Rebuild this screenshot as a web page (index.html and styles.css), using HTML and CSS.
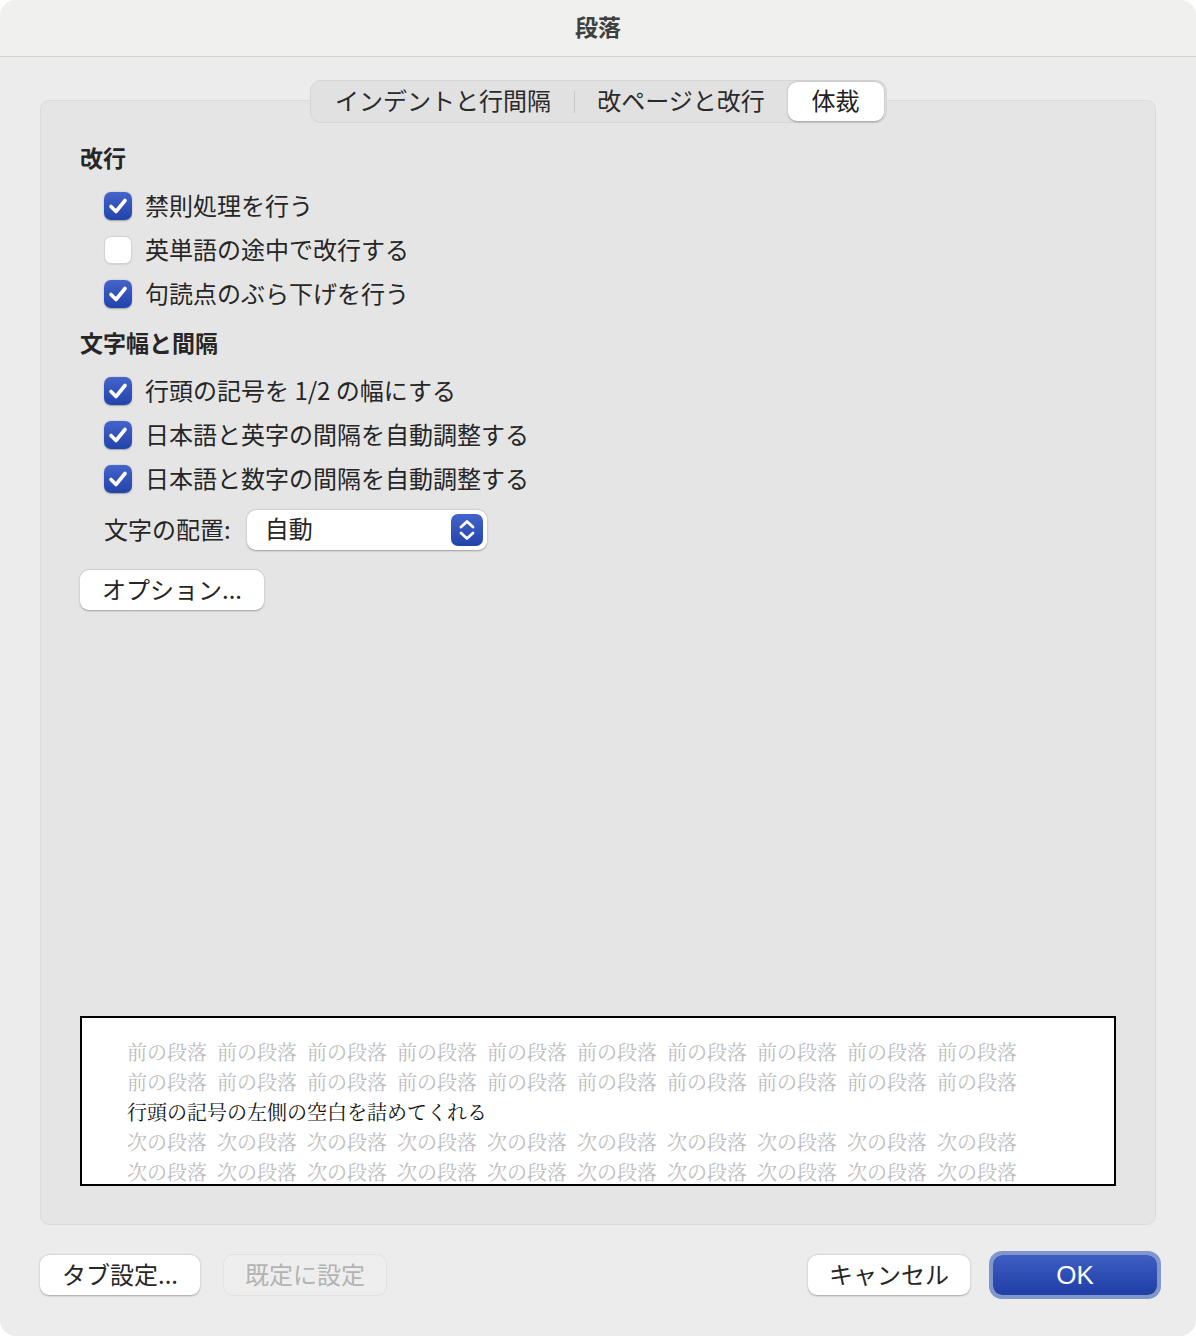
FILE: index.html
```html
<!DOCTYPE html>
<html lang="ja">
<head>
<meta charset="utf-8">
<title>段落</title>
<link rel="stylesheet" href="styles.css">
</head>
<body>
<div class="window">
  <div class="titlebar">段落</div>
  <div class="content">
    <div class="tabs-row">
      <div class="tabs">
        <div class="tab tab-1">インデントと行間隔</div>
        <div class="tab-divider"></div>
        <div class="tab tab-2">改ページと改行</div>
        <div class="tab tab-3 selected">体裁</div>
      </div>
    </div>
    <div class="group">
      <div class="heading">改行</div>
      <div class="row"><span class="checkbox checked"><svg viewBox="0 0 28 28" width="28" height="28"><path d="M7 14.5 L12 19.5 L21 8.5" fill="none" stroke="#fff" stroke-width="3.6" stroke-linecap="round" stroke-linejoin="round"/></svg></span><span class="label">禁則処理を行う</span></div>
      <div class="row"><span class="checkbox"></span><span class="label">英単語の途中で改行する</span></div>
      <div class="row"><span class="checkbox checked"><svg viewBox="0 0 28 28" width="28" height="28"><path d="M7 14.5 L12 19.5 L21 8.5" fill="none" stroke="#fff" stroke-width="3.6" stroke-linecap="round" stroke-linejoin="round"/></svg></span><span class="label">句読点のぶら下げを行う</span></div>

      <div class="heading heading-2">文字幅と間隔</div>
      <div class="row"><span class="checkbox checked"><svg viewBox="0 0 28 28" width="28" height="28"><path d="M7 14.5 L12 19.5 L21 8.5" fill="none" stroke="#fff" stroke-width="3.6" stroke-linecap="round" stroke-linejoin="round"/></svg></span><span class="label">行頭の記号を 1/2 の幅にする</span></div>
      <div class="row"><span class="checkbox checked"><svg viewBox="0 0 28 28" width="28" height="28"><path d="M7 14.5 L12 19.5 L21 8.5" fill="none" stroke="#fff" stroke-width="3.6" stroke-linecap="round" stroke-linejoin="round"/></svg></span><span class="label">日本語と英字の間隔を自動調整する</span></div>
      <div class="row"><span class="checkbox checked"><svg viewBox="0 0 28 28" width="28" height="28"><path d="M7 14.5 L12 19.5 L21 8.5" fill="none" stroke="#fff" stroke-width="3.6" stroke-linecap="round" stroke-linejoin="round"/></svg></span><span class="label">日本語と数字の間隔を自動調整する</span></div>

      <div class="popup-row">
        <span class="label">文字の配置:</span>
        <div class="popup">
          <span class="popup-value">自動</span>
          <span class="stepper"><svg viewBox="0 0 32 32" width="32" height="32"><path d="M10 13 L16 7.5 L22 13 M10 19 L16 24.5 L22 19" fill="none" stroke="#fff" stroke-width="2.8" stroke-linecap="round" stroke-linejoin="round"/></svg></span>
        </div>
      </div>

      <div class="options-row"><button class="btn btn-options">オプション...</button></div>

      <div class="preview">
        <div class="pline grey"><span>前の段落</span><span>前の段落</span><span>前の段落</span><span>前の段落</span><span>前の段落</span><span>前の段落</span><span>前の段落</span><span>前の段落</span><span>前の段落</span><span>前の段落</span></div>
        <div class="pline grey"><span>前の段落</span><span>前の段落</span><span>前の段落</span><span>前の段落</span><span>前の段落</span><span>前の段落</span><span>前の段落</span><span>前の段落</span><span>前の段落</span><span>前の段落</span></div>
        <div class="pline main">行頭の記号の左側の空白を詰めてくれる</div>
        <div class="pline grey"><span>次の段落</span><span>次の段落</span><span>次の段落</span><span>次の段落</span><span>次の段落</span><span>次の段落</span><span>次の段落</span><span>次の段落</span><span>次の段落</span><span>次の段落</span></div>
        <div class="pline grey"><span>次の段落</span><span>次の段落</span><span>次の段落</span><span>次の段落</span><span>次の段落</span><span>次の段落</span><span>次の段落</span><span>次の段落</span><span>次の段落</span><span>次の段落</span></div>
      </div>
    </div>

    <div class="footer">
      <div class="footer-left">
        <button class="btn btn-tab">タブ設定...</button>
        <button class="btn btn-default disabled">既定に設定</button>
      </div>
      <div class="footer-right">
        <button class="btn btn-cancel">キャンセル</button>
        <button class="btn btn-ok">OK</button>
      </div>
    </div>
  </div>
</div>
</body>
</html>
```

FILE: styles.css
```css
html, body {
  margin: 0;
  padding: 0;
  background: #ffffff;
}

body {
  font-family: "Noto Sans CJK JP", "Noto Sans", sans-serif;
  color: #262626;
}

.window {
  width: 1196px;
  height: 1336px;
  background: #ececec;
  border-radius: 16px;
  overflow: hidden;
  display: flex;
  flex-direction: column;
  box-sizing: border-box;
}

.titlebar {
  height: 56px;
  flex: none;
  box-sizing: border-box;
  background: #f0f0ef;
  border-bottom: 1px solid #d2d2d2;
  display: flex;
  align-items: center;
  justify-content: center;
  font-size: 23px;
  font-weight: 700;
  color: #3f3f3f;
  padding-bottom: 5px;
  box-sizing: content-box;
  height: 51px;
}

.content {
  flex: 1;
  display: flex;
  flex-direction: column;
  padding: 0 40px;
}

.tabs-row {
  display: flex;
  justify-content: center;
  margin-top: 23px;
  position: relative;
  z-index: 2;
}

.tabs {
  display: flex;
  align-items: center;
  height: 43px;
  box-sizing: border-box;
  padding: 2px;
  background: #e1e1e1;
  border: 1px solid #d6d6d6;
  border-radius: 11px;
}

.tab {
  height: 39px;
  box-sizing: border-box;
  padding-bottom: 3px;
  display: flex;
  align-items: center;
  justify-content: center;
  font-size: 24px;
  color: #2a2a2a;
  line-height: 1;
}

.tab-1 { width: 261px; }
.tab-2 { width: 213px; }
.tab-3 { width: 96px; }

.tab-divider {
  width: 1px;
  height: 22px;
  background: #c8c8c8;
}

.tab.selected {
  background: #ffffff;
  border-radius: 9px;
  box-shadow: 0 0.5px 2px rgba(0, 0, 0, 0.3);
  color: #222;
}

.group {
  flex: none;
  height: 1125px;
  margin-top: -23px;
  box-sizing: border-box;
  background: #e5e5e5;
  border: 1px solid #dbdbdb;
  border-radius: 9px;
  padding: 38px 39px 38px 39px;
  display: flex;
  flex-direction: column;
}

.heading {
  height: 36px;
  line-height: 36px;
  font-size: 23px;
  font-weight: 700;
  color: #262626;
  margin-bottom: 9px;
}

.heading-2 {
  margin-top: 8px;
}

.row {
  height: 44px;
  display: flex;
  align-items: center;
  padding-left: 24px;
}

.checkbox {
  width: 28px;
  height: 28px;
  flex: none;
  box-sizing: border-box;
  border-radius: 7px;
  background: #ffffff;
  border: 1px solid #d3d3d3;
  box-shadow: 0 0.5px 1px rgba(0, 0, 0, 0.08);
  margin-right: 13px;
  display: flex;
  align-items: center;
  justify-content: center;
}

.checkbox.checked {
  border: none;
  background: linear-gradient(#4464cc, #2243aa);
  box-shadow: 0 0.5px 1.5px rgba(0, 0, 0, 0.3);
}

.checkbox svg {
  display: block;
}

.label {
  font-size: 24px;
  line-height: 1;
  color: #262626;
  white-space: nowrap;
  padding-bottom: 2px;
}

.popup-row {
  display: flex;
  align-items: center;
  margin-top: 9px;
  padding-left: 24px;
  height: 40px;
}

.popup-row .label {
  margin-right: 16px;
}

.popup {
  width: 240px;
  height: 40px;
  box-sizing: border-box;
  background: #ffffff;
  border-radius: 9px;
  box-shadow: 0 0.5px 2px rgba(0, 0, 0, 0.32);
  display: flex;
  align-items: center;
  justify-content: space-between;
  padding: 0 4px 0 18px;
}

.popup-value {
  font-size: 24px;
  line-height: 1;
  padding-bottom: 4px;
  color: #262626;
}

.stepper {
  width: 32px;
  height: 32px;
  border-radius: 7px;
  background: linear-gradient(#4464cc, #2243aa);
  display: flex;
}

.stepper svg {
  display: block;
}

.options-row {
  margin-top: 20px;
  display: flex;
}

.btn {
  font-family: "Noto Sans CJK JP", "Noto Sans", sans-serif;
  font-size: 24px;
  height: 40px;
  box-sizing: border-box;
  border: none;
  border-radius: 9px;
  background: #ffffff;
  color: #262626;
  box-shadow: 0 0.5px 2px rgba(0, 0, 0, 0.3);
  padding: 0 0 3px 0;
  line-height: 1;
  display: flex;
  align-items: center;
  justify-content: center;
}

.btn-options {
  width: 184px;
}

.preview {
  margin-top: auto;
  height: 170px;
  box-sizing: border-box;
  border: 2px solid #000;
  background: #ffffff;
  overflow: hidden;
  padding: 19px 0 0 45px;
  font-family: "Noto Serif CJK JP", "Noto Sans CJK JP", serif;
  font-size: 20px;
}

.pline {
  height: 30px;
  line-height: 30px;
  white-space: nowrap;
  display: flex;
}

.pline.grey {
  color: #bcbcbc;
}

.pline.grey span {
  margin-right: 10px;
}

.pline.main {
  color: #111111;
}

.footer {
  display: flex;
  justify-content: space-between;
  align-items: center;
  margin-top: 30px;
}

.footer-left,
.footer-right {
  display: flex;
  align-items: center;
}

.btn-tab {
  width: 160px;
}

.btn-default {
  width: 162px;
  margin-left: 24px;
}

.btn.disabled {
  background: #eeeeee;
  color: #b3b3b3;
  box-shadow: 0 0 0 1px #e2e2e2;
}

.btn-cancel {
  width: 162px;
}

.btn-ok {
  width: 164px;
  margin-left: 23px;
  margin-right: -1px;
  padding-bottom: 0;
  color: #ffffff;
  background: linear-gradient(#3e5ec4, #1f3ea6);
  box-shadow: 0 0 0 4px #8196cb;
  font-family: "Liberation Sans", "Noto Sans", sans-serif;
  font-size: 26px;
}
```
